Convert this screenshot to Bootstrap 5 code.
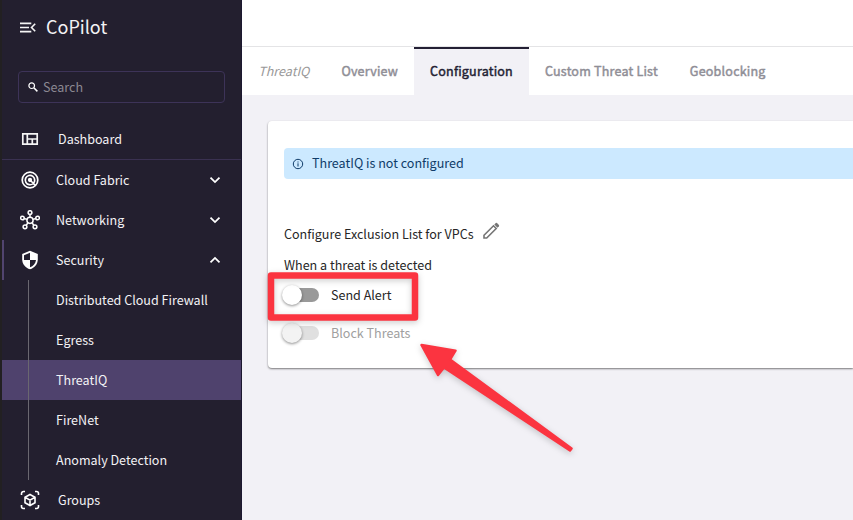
<!DOCTYPE html>
<html lang="en">
<head>
<meta charset="utf-8">
<meta name="viewport" content="width=device-width, initial-scale=1">
<title>CoPilot - ThreatIQ</title>
<link href="https://cdn.jsdelivr.net/npm/bootstrap@5.3.0/dist/css/bootstrap.min.css" rel="stylesheet">
<style>
body{font-family:"Noto Sans CJK SC","Noto Sans",sans-serif;font-size:12.55px;line-height:20px;color:#262626;background:#f2f1f6}
svg{display:block;flex:none}
.app{width:853px;height:520px}
.side{width:242px;background:#231f2f;color:#f3f2f5;border-left:2px solid #222022;border-right:1px solid #1c1830}
.brand-row{height:55px;padding-left:18px}
.brand-name{font-size:18px;margin:-3px 0 0 10px}
.search-box{height:32px;margin:16px 16px 16px;border:1px solid #3d3358;border-radius:4px;padding-left:9px;color:#8b8892}
.search-box span{margin-left:5px}
.side .nav-link{height:40px;padding:0 20px 0 18px;color:#f3f2f5}
.side .dash{height:41px;border-bottom:1px solid #3a3151}
.side .nav-link span{margin-left:16px}
.side .nav-link.wide-gap span{margin-left:18px}
.side .open{border-left:2px solid #51446f;padding-left:16px}
.tree .nav-link{padding-left:54px;position:relative}
.tree .nav-link::before{content:"";position:absolute;left:26px;top:0;bottom:0;width:1px;background:#6a6770}
.tree .nav-link.active{background:#4f426d}
.side .nav-link.active{color:#f3f2f5}
.topbar{height:47px;border-bottom:1px solid #e4e4e6}
.tabs{height:48px}
.tabs .nav-link{height:48px;padding:0 15.8px 0 16.2px;color:#8f8e96;font-weight:400;letter-spacing:.2px;-webkit-text-stroke:.45px currentColor}
.tabs .nav-link.active{background:#f2f1f6;color:#231f34;border-top:2px solid #231f34;padding-bottom:2px}
.tabs .crumb{font-style:italic;letter-spacing:0;-webkit-text-stroke:0;color:#999}
.panel-card{margin:26px 0 0 26px;height:247px;border-radius:4px 0 0 4px;padding:27px 0 0 16px;box-shadow:0 1px 2px rgba(0,0,0,.5)}
.notice{height:31px;background:#cce9ff;color:#0f3c69;border-radius:4px 0 0 4px;padding-left:8px}
.notice span{margin:-1px 0 0 8px}
.excl{margin-top:45px;height:20px}
.excl svg{margin:-7px 0 0 8px}
.when{margin-top:11px;height:20px}
.toggles{padding-top:1px}
.toggle-row{height:38px}
.knob-track{width:34px;height:14px;border-radius:7px;background:#999;margin-left:1px}
.knob-track i{display:block;width:20px;height:20px;border-radius:50%;background:#fff;margin:-3px 0 0 -3px;box-shadow:0 1px 3px rgba(0,0,0,.45)}
.toggle-row span{margin-left:12px}
.off{color:#a0a0a0}
.off .knob-track{background:#e0e0e0}
.off .knob-track i{background:#f3f3f3}
.marks{left:0;top:0;pointer-events:none}
</style>
</head>
<body class="overflow-hidden">
<div class="app d-flex position-relative overflow-hidden">
<aside class="side d-flex flex-column flex-shrink-0">
  <div class="brand-row d-flex align-items-center">
    <svg width="16" height="12" viewBox="0 0 16 12" fill="none" stroke="#f5f5f5" stroke-width="1.600"><path d="M0 1.400h11.300M0 5.500h9M0 9.600h11.300M15.200 1.700l-3.700 3.800 3.700 3.800"/></svg>
    <span class="brand-name">CoPilot</span>
  </div>
  <div class="search-box d-flex align-items-center">
    <svg width="10" height="10" viewBox="0 0 10 10" fill="none" stroke="#fff" stroke-width="1.200"><circle cx="3.700" cy="3.700" r="2.800"/><path d="m5.800 5.800 3.600 3.600" stroke-width="1.500"/></svg>
    <span>Search</span>
  </div>
  <nav class="nav flex-column flex-nowrap">
    <a class="nav-link wide-gap dash d-flex align-items-center" href="#"><svg width="20" height="20" viewBox="0 0 20 20" fill="none" stroke="#f5f5f5" stroke-width="1.700"><path d="M2.800 4.800h14.400v10.400H2.800zM7.300 4.800v10.400M7.300 10h9.900M12.300 10v5.200"/></svg><span>Dashboard</span></a>
    <a class="nav-link d-flex align-items-center" href="#"><svg width="20" height="20" viewBox="0 0 20 20" fill="none" stroke="#fff" stroke-width="1.700"><circle cx="10" cy="10" r="7.800"/><path d="M13.200 13.500A4.700 4.700 0 1 1 14.700 10c0 1.100-.3 2-.8 2.700M10 10l5.500 5.500"/><circle cx="10" cy="10" r="1.300" fill="#fff"/></svg><span>Cloud Fabric</span><svg class="ms-auto" width="12" height="8" viewBox="0 0 12 8" fill="none" stroke="#fff" stroke-width="1.800"><path d="m1.500 1.700 4.500 4.400 4.500-4.400"/></svg></a>
    <a class="nav-link d-flex align-items-center" href="#"><svg width="20" height="20" viewBox="0 0 20 20" fill="none" stroke="#fff" stroke-width="1.500"><circle cx="10" cy="10.300" r="3.100"/><circle cx="10" cy="2.600" r="1.900"/><circle cx="2.400" cy="8" r="1.800"/><circle cx="17.600" cy="8" r="1.800"/><circle cx="5" cy="16.800" r="1.900"/><circle cx="15" cy="16.800" r="1.900"/><path d="M10 4.500v2.700M4.200 8.500l2.800.9M15.800 8.500l-2.800.9M6.200 15.200 8 12.800M13.800 15.200 12 12.800"/></svg><span>Networking</span><svg class="ms-auto" width="12" height="8" viewBox="0 0 12 8" fill="none" stroke="#fff" stroke-width="1.800"><path d="m1.500 1.700 4.500 4.400 4.500-4.400"/></svg></a>
    <a class="nav-link open d-flex align-items-center" href="#"><svg width="20" height="20" viewBox="0 0 20 20"><path fill="#fff" d="M10 .8 2.200 4v5.200c0 4.800 3.200 8.700 7.800 10 4.600-1.300 7.800-5.200 7.800-10V4z"/><path fill="#231f2f" d="M10 2.800V10H4V5.200zM10 10h6c-.4 3.300-2.700 6.200-6 7.300z"/></svg><span>Security</span><svg class="ms-auto" width="12" height="8" viewBox="0 0 12 8" fill="none" stroke="#fff" stroke-width="1.800"><path d="M1.500 6.300 6 1.900l4.500 4.400"/></svg></a>
    <div class="tree">
      <a class="nav-link d-flex align-items-center" href="#">Distributed Cloud Firewall</a>
      <a class="nav-link d-flex align-items-center" href="#">Egress</a>
      <a class="nav-link active d-flex align-items-center" href="#">ThreatIQ</a>
      <a class="nav-link d-flex align-items-center" href="#">FireNet</a>
      <a class="nav-link d-flex align-items-center" href="#">Anomaly Detection</a>
    </div>
    <a class="nav-link wide-gap d-flex align-items-center" href="#"><svg width="20" height="20" viewBox="0 0 20 20" fill="none" stroke="#fff" stroke-width="1.600"><path d="M1.500 5V3.500a2 2 0 0 1 2-2H5M15 1.500h1.500a2 2 0 0 1 2 2V5M18.500 15v1.500a2 2 0 0 1-2 2H15M5 18.500H3.500a2 2 0 0 1-2-2V15M10 4.500l5 2.800v5.400l-5 2.800-5-2.800V7.300zM5 7.300l5 2.900 5-2.900M10 10.200v5.300"/></svg><span>Groups</span></a>
  </nav>
</aside>
<main class="flex-grow-1">
  <div class="topbar bg-white"></div>
  <nav class="tabs nav bg-white flex-nowrap">
    <span class="nav-link crumb d-flex align-items-center">ThreatIQ</span>
    <a class="nav-link d-flex align-items-center" href="#">Overview</a>
    <a class="nav-link active d-flex align-items-center" href="#">Configuration</a>
    <a class="nav-link d-flex align-items-center text-nowrap" href="#">Custom Threat List</a>
    <a class="nav-link d-flex align-items-center" href="#">Geoblocking</a>
  </nav>
  <section class="panel-card bg-white">
    <div class="notice d-flex align-items-center"><svg width="12" height="12" viewBox="0 0 12 12" fill="none" stroke="#0f3c69" stroke-width="1"><circle cx="6" cy="6" r="4.700"/><path d="M6 5.300v3.200M6 3.500v1"/></svg><span>ThreatIQ is not configured</span></div>
    <div class="excl d-flex align-items-center"><div>Configure Exclusion List for VPCs</div><svg width="18" height="18" viewBox="0 0 18 18" fill="none" stroke="#757575" stroke-width="1.600"><path d="M2 13.300 11.500 3.800l2.700 2.700L4.700 16H2z"/><path fill="#757575" stroke="none" d="m12.300 2.600 1.500-1.500q.6-.5 1.200 0l1.900 1.900q.5.600 0 1.200l-1.500 1.500z"/></svg></div>
    <div class="when">When a threat is detected</div>
    <div class="toggles">
      <div class="toggle-row d-flex align-items-center"><div class="knob-track"><i></i></div><span>Send Alert</span></div>
      <div class="toggle-row off d-flex align-items-center"><div class="knob-track"><i></i></div><span>Block Threats</span></div>
    </div>
  </section>
</main>
<svg class="marks position-absolute" width="853" height="520" viewBox="0 0 853 520">
  <g style="filter:drop-shadow(0 2px 3px rgba(0,0,0,.2))" stroke-linejoin="round">
    <rect x="271" y="275.500" width="144" height="42" fill="none" stroke="#fb3440" stroke-width="6.500"/>
    <path d="M421.500 345 455.500 350.700 450 359.500 571.500 448.500 570 450.500 444 367.500 438 375z" fill="#fb3440" stroke="#fb3440" stroke-width="2.500"/>
  </g>
</svg>
</div>
<script src="https://cdn.jsdelivr.net/npm/bootstrap@5.3.0/dist/js/bootstrap.bundle.min.js"></script>
</body>
</html>
